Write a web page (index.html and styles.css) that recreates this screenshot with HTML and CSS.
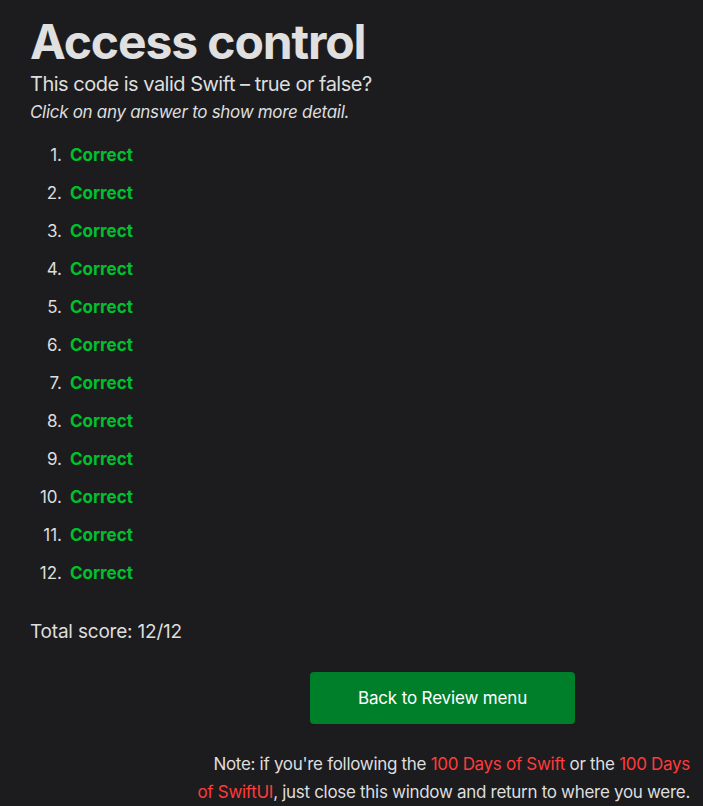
FILE: index.html
```html
<!DOCTYPE html>
<html lang="en">
<head>
<meta charset="utf-8">
<title>Access control</title>
<link rel="stylesheet" href="styles.css">
</head>
<body>
<main class="page">
  <h1 class="title">Access control</h1>
  <p class="lead">This code is valid Swift – true or false?</p>
  <p class="hint">Click on any answer to show more detail.</p>
  <ol class="answers">
    <li><span class="correct">Correct</span></li>
    <li><span class="correct">Correct</span></li>
    <li><span class="correct">Correct</span></li>
    <li><span class="correct">Correct</span></li>
    <li><span class="correct">Correct</span></li>
    <li><span class="correct">Correct</span></li>
    <li><span class="correct">Correct</span></li>
    <li><span class="correct">Correct</span></li>
    <li><span class="correct">Correct</span></li>
    <li><span class="correct">Correct</span></li>
    <li><span class="correct">Correct</span></li>
    <li><span class="correct">Correct</span></li>
  </ol>
  <p class="score">Total score: 12/12</p>
  <div class="actions">
    <a class="btn" href="#">Back to Review menu</a>
  </div>
  <p class="note">Note: if you're following the <a href="#">100 Days of Swift</a> or the <a href="#">100 Days of SwiftUI</a>, just close this window and return to where you were.</p>
</main>
</body>
</html>
```
FILE: styles.css
```css
html, body {
  margin: 0;
  padding: 0;
  background: #1c1c1e;
}
body {
  font-family: Inter, "Noto Sans", sans-serif;
  color: #dedede;
}
.page {
  padding: 14px 13px 0 30px;
}
.title {
  margin: 0;
  font-size: 48px;
  font-weight: 700;
  line-height: 56px;
  letter-spacing: -1.1px;
  color: #e0e0e0;
}
.lead {
  margin: 0;
  font-size: 20px;
  line-height: 28px;
  letter-spacing: -0.5px;
}
.hint {
  margin: 0;
  font-size: 17px;
  font-style: italic;
  line-height: 28px;
  letter-spacing: -0.3px;
}
.answers {
  margin: 10px 0 0 0;
  padding: 0;
  list-style: none;
  counter-reset: item;
  font-size: 17px;
}
.answers li {
  counter-increment: item;
  line-height: 24px;
  padding: 7px 0;
}
.answers li::before {
  content: counter(item) ".";
  display: inline-block;
  width: 32px;
  margin-right: 8px;
  text-align: right;
  color: #dedede;
}
.correct {
  color: #00c02e;
  font-weight: 700;
}
.score {
  margin: 27px 0 0 0;
  font-size: 19px;
  line-height: 26px;
  letter-spacing: -0.2px;
}
.actions {
  margin-top: 27px;
  padding-left: 280px;
}
.btn {
  display: flex;
  align-items: center;
  justify-content: center;
  width: 265px;
  height: 52px;
  background: #007f2a;
  color: #ffffff;
  border-radius: 4px;
  font-size: 17px;
  letter-spacing: -0.15px;
  text-decoration: none;
}
.note {
  width: 495px;
  margin: 26px 0 0 auto;
  text-align: right;
  font-size: 17px;
  line-height: 28px;
  letter-spacing: -0.3px;
}
.note a {
  color: #ff3b3b;
  text-decoration: none;
}
```
